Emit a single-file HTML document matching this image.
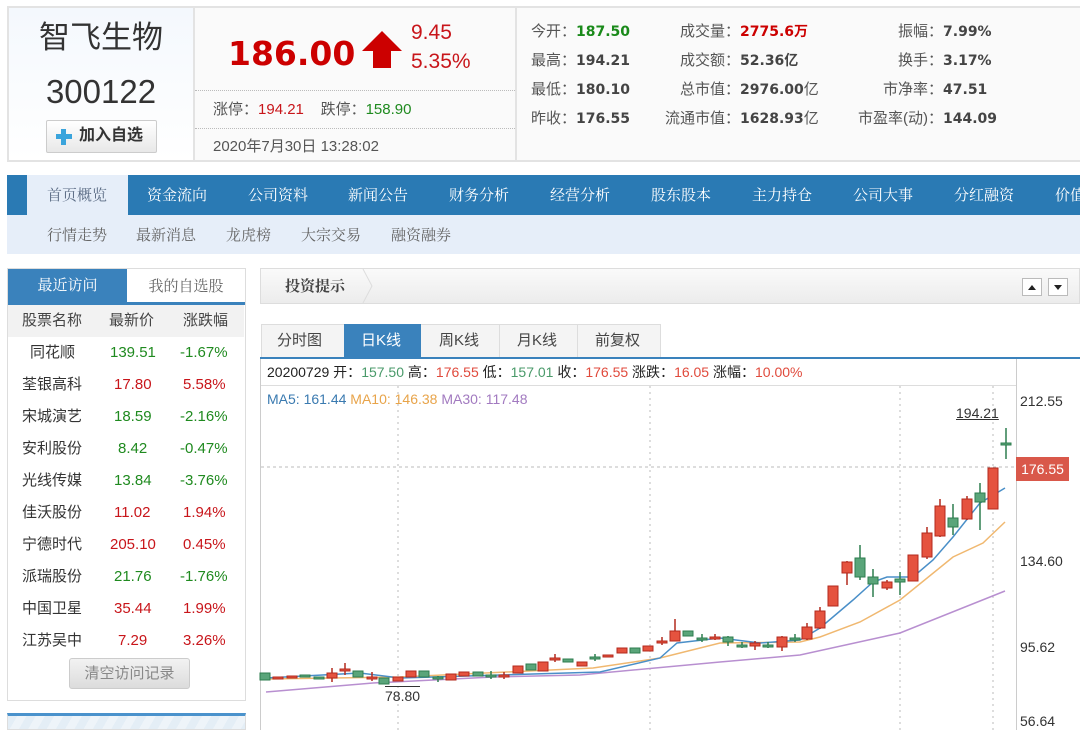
<!DOCTYPE html>
<html><head><meta charset="utf-8">
<style>
*{margin:0;padding:0;box-sizing:border-box}
body{width:1080px;height:730px;overflow:hidden;background:#fff;font-family:"Liberation Sans","Noto Sans CJK SC",sans-serif;color:#333;position:relative}
.a{position:absolute;white-space:nowrap}
.r{color:#c8151a}.g{color:#1f8a1f}
.nav span{position:absolute;top:0;line-height:40px;font-size:15px;color:#fff;font-family:"Noto Serif CJK SC","Noto Sans CJK SC",serif}
.sub span{position:absolute;line-height:40px;font-size:15px;color:#666;font-family:"Noto Serif CJK SC","Noto Sans CJK SC",serif}
.st{position:absolute;font-size:15px;color:#555;line-height:20px}
.st b{color:#444;font-family:"DejaVu Sans","Noto Sans CJK SC",sans-serif;font-size:14px}
.row{position:absolute;left:8px;width:236px;height:32px;font-size:15px;line-height:32px}
.row span{position:absolute}
</style></head><body>
<div class="a" style="left:7px;top:6px;width:1073px;height:156px;border:2px solid #e3e3e3"></div>
<div class="a" style="left:9px;top:8px;width:184px;height:152px;background:linear-gradient(#f4f8fd,#fff)"></div>
<div class="a" style="left:193px;top:8px;width:2px;height:152px;background:#e3e3e3"></div>
<div class="a" style="left:195px;top:8px;width:320px;height:152px;background:#fafafa"></div>
<div class="a" style="left:515px;top:8px;width:2px;height:152px;background:#e3e3e3"></div>
<div class="a" style="left:517px;top:8px;width:563px;height:152px;background:#fafafa"></div>
<div class="a" style="left:9px;top:18px;width:184px;text-align:center;font-size:31px;line-height:40px;color:#333">智飞生物</div>
<div class="a" style="left:9px;top:72px;width:184px;text-align:center;font-size:33px;line-height:40px;color:#333">300122</div>
<div class="a" style="left:46px;top:120px;width:111px;height:33px;border:1px solid #ccc;border-radius:2px;background:linear-gradient(#fff,#e8e8e8)"></div>
<div class="a" style="left:56px;top:134px;width:16px;height:5px;background:#3aa4dc"></div>
<div class="a" style="left:61px;top:129px;width:5px;height:16px;background:#3aa4dc"></div>
<div class="a" style="left:79px;top:124px;font-size:16px;font-weight:bold;line-height:24px;color:#333">加入自选</div>
<div class="a" style="left:228px;top:31px;font-size:33px;font-weight:bold;line-height:46px;color:#c00;font-family:'DejaVu Sans',sans-serif">186.00</div>
<svg class="a" style="left:362px;top:30px" width="42" height="40"><path d="M20 1 L40 21 L29 21 L29 38 L11 38 L11 21 L0 21 Z" fill="#c00"/></svg>
<div class="a r" style="left:411px;top:20px;font-size:21px;line-height:26px">9.45</div>
<div class="a r" style="left:411px;top:49px;font-size:21px;line-height:26px">5.35%</div>
<div class="a" style="left:195px;top:90px;width:320px;border-top:1px dotted #bbb"></div>
<div class="a" style="left:195px;top:128px;width:320px;border-top:1px dotted #bbb"></div>
<div class="a" style="left:213px;top:100px;font-size:15px;line-height:20px;color:#555">涨停：<span class="r">194.21</span>&nbsp;&nbsp;&nbsp;&nbsp;跌停：<span class="g">158.90</span></div>
<div class="a" style="left:213px;top:137px;font-size:15px;line-height:20px;color:#555">2020年7月30日 13:28:02</div>
<div class="st" style="left:531px;top:22px">今开：<b style="color:#1a8a1a">187.50</b></div>
<div class="st" style="left:531px;top:51px">最高：<b>194.21</b></div>
<div class="st" style="left:531px;top:80px">最低：<b>180.10</b></div>
<div class="st" style="left:531px;top:109px">昨收：<b>176.55</b></div>
<div class="st" style="left:680px;top:22px">成交量：<b style="color:#c00">2775.6万</b></div>
<div class="st" style="left:680px;top:51px">成交额：<b>52.36亿</b></div>
<div class="st" style="left:680px;top:80px">总市值：<b>2976.00</b>亿</div>
<div class="st" style="left:665px;top:109px">流通市值：<b>1628.93</b>亿</div>
<div class="st" style="left:898px;top:22px">振幅：<b>7.99%</b></div>
<div class="st" style="left:898px;top:51px">换手：<b>3.17%</b></div>
<div class="st" style="left:883px;top:80px">市净率：<b>47.51</b></div>
<div class="st" style="left:858px;top:109px">市盈率(动)：<b>144.09</b></div>
<div class="a nav" style="left:7px;top:175px;width:1073px;height:40px;background:#2a7ab4">
<div class="a" style="left:20px;top:0;width:101px;height:40px;background:#e6eef9"></div>
<span style="left:40px;color:#5a6b84">首页概览</span><span style="left:140px">资金流向</span><span style="left:241px">公司资料</span><span style="left:341px">新闻公告</span><span style="left:442px">财务分析</span><span style="left:543px">经营分析</span><span style="left:644px">股东股本</span><span style="left:745px">主力持仓</span><span style="left:846px">公司大事</span><span style="left:947px">分红融资</span><span style="left:1048px">价值</span>
</div>
<div class="a sub" style="left:7px;top:215px;width:1073px;height:39px;background:#e6eef9">
<span style="left:40px;top:0">行情走势</span><span style="left:129px;top:0">最新消息</span><span style="left:219px;top:0">龙虎榜</span><span style="left:294px;top:0">大宗交易</span><span style="left:384px;top:0">融资融券</span>
</div>
<div class="a" style="left:7px;top:268px;width:239px;height:433px;border:1px solid #ddd"></div>
<div class="a" style="left:8px;top:269px;width:119px;height:33px;background:#3a82bc;color:#fff;font-size:15px;line-height:32px;text-align:center;font-family:'Noto Serif CJK SC',serif">最近访问</div>
<div class="a" style="left:127px;top:269px;width:118px;height:33px;color:#666;font-size:15px;line-height:34px;text-align:center;font-family:'Noto Serif CJK SC',serif">我的自选股</div>
<div class="a" style="left:8px;top:302px;width:237px;height:3px;background:#3a82bc"></div>
<div class="row" style="top:305px;background:#f2f2f2;color:#444"><span style="left:14px">股票名称</span><span style="left:101px">最新价</span><span style="left:175px">涨跌幅</span></div>
<div class="row" style="top:337px"><span style="left:22px">同花顺</span><span class="g" style="left:102px">139.51</span><span class="g" style="left:172px">-1.67%</span></div>
<div class="row" style="top:369px"><span style="left:14px">荃银高科</span><span class="r" style="left:106px">17.80</span><span class="r" style="left:175px">5.58%</span></div>
<div class="row" style="top:401px"><span style="left:14px">宋城演艺</span><span class="g" style="left:106px">18.59</span><span class="g" style="left:172px">-2.16%</span></div>
<div class="row" style="top:433px"><span style="left:14px">安利股份</span><span class="g" style="left:110px">8.42</span><span class="g" style="left:172px">-0.47%</span></div>
<div class="row" style="top:465px"><span style="left:14px">光线传媒</span><span class="g" style="left:106px">13.84</span><span class="g" style="left:172px">-3.76%</span></div>
<div class="row" style="top:497px"><span style="left:14px">佳沃股份</span><span class="r" style="left:106px">11.02</span><span class="r" style="left:175px">1.94%</span></div>
<div class="row" style="top:529px"><span style="left:14px">宁德时代</span><span class="r" style="left:102px">205.10</span><span class="r" style="left:175px">0.45%</span></div>
<div class="row" style="top:561px"><span style="left:14px">派瑞股份</span><span class="g" style="left:106px">21.76</span><span class="g" style="left:172px">-1.76%</span></div>
<div class="row" style="top:593px"><span style="left:14px">中国卫星</span><span class="r" style="left:106px">35.44</span><span class="r" style="left:175px">1.99%</span></div>
<div class="row" style="top:625px"><span style="left:14px">江苏吴中</span><span class="r" style="left:110px">7.29</span><span class="r" style="left:175px">3.26%</span></div>
<div class="a" style="left:69px;top:658px;width:121px;height:31px;border:1px solid #ccc;border-radius:3px;background:linear-gradient(#f2f2f2,#dcdcdc);color:#888;font-size:15px;line-height:29px;text-align:center">清空访问记录</div>
<div class="a" style="left:7px;top:713px;width:239px;height:17px;border:1px solid #ddd;border-top:3px solid #4a92cc;background:repeating-linear-gradient(120deg,#e4eef6 0 8px,#eef4f9 8px 16px)"></div>
<div class="a" style="left:260px;top:268px;width:820px;height:36px;border:1px solid #ddd;background:linear-gradient(#fafafa,#ececec)"></div>
<div class="a" style="left:285px;top:276px;font-size:15px;line-height:20px;font-weight:bold;color:#444;font-family:'Noto Serif CJK SC',serif">投资提示</div>
<svg class="a" style="left:362px;top:269px" width="12" height="34"><path d="M1 0 L10 17 L1 34" fill="none" stroke="#ddd"/></svg>
<div class="a" style="left:1022px;top:278px;width:20px;height:18px;border:1px solid #bbb;background:#fff"></div>
<div class="a" style="left:1048px;top:278px;width:20px;height:18px;border:1px solid #bbb;background:#fff"></div>
<svg class="a" style="left:1022px;top:278px" width="48" height="18"><path d="M6 12 L10 7 L14 12Z" fill="#222"/><path d="M32 7 L36 12 L40 7Z" fill="#222"/></svg>
<div class="a" style="left:261px;top:324px;width:400px;height:34px;border:1px solid #ddd;background:#f4f4f4"></div>
<div class="a" style="left:344px;top:324px;width:1px;height:34px;background:#ddd"></div>
<div class="a" style="left:420px;top:324px;width:1px;height:34px;background:#ddd"></div>
<div class="a" style="left:499px;top:324px;width:1px;height:34px;background:#ddd"></div>
<div class="a" style="left:577px;top:324px;width:1px;height:34px;background:#ddd"></div>
<div class="a" style="left:344px;top:324px;width:77px;height:34px;background:#3a82bc"></div>
<div class="a" style="left:277px;top:331px;font-size:15px;line-height:20px;color:#444">分时图</div>
<div class="a" style="left:361px;top:331px;font-size:15px;line-height:20px;color:#fff">日K线</div>
<div class="a" style="left:439px;top:331px;font-size:15px;line-height:20px;color:#444">周K线</div>
<div class="a" style="left:517px;top:331px;font-size:15px;line-height:20px;color:#444">月K线</div>
<div class="a" style="left:595px;top:331px;font-size:15px;line-height:20px;color:#444">前复权</div>
<div class="a" style="left:260px;top:357px;width:820px;height:2px;background:#3a82bc"></div>
<div class="a" style="left:260px;top:359px;width:1px;height:371px;background:#ccc"></div>
<div class="a" style="left:1016px;top:359px;width:1px;height:371px;background:#ccc"></div>
<div class="a" style="left:261px;top:385px;width:755px;height:1px;background:#ddd"></div>
<div class="a" style="left:267px;top:362px;font-size:14px;line-height:20px;color:#222">20200729 开：<span style="color:#4a9a6a">157.50</span> 高：<span style="color:#e04a3c">176.55</span> 低：<span style="color:#4a9a6a">157.01</span> 收：<span style="color:#e04a3c">176.55</span> 涨跌：<span style="color:#e04a3c">16.05</span> 涨幅：<span style="color:#e04a3c">10.00%</span></div>
<div class="a" style="left:267px;top:389px;font-size:14px;line-height:20px"><span style="color:#3a7ab0">MA5: 161.44</span> <span style="color:#e8a44a">MA10: 146.38</span> <span style="color:#a27ac0">MA30: 117.48</span></div>
<svg class="a" style="left:0;top:0" width="1080" height="730">
<g stroke="#bbb" stroke-dasharray="2,4"><line x1="398" y1="386" x2="398" y2="730"/><line x1="650" y1="386" x2="650" y2="730"/><line x1="900" y1="386" x2="900" y2="730"/><line x1="993" y1="386" x2="993" y2="730"/><line x1="261" y1="467" x2="1016" y2="467" stroke-dasharray="3,3"/></g>
<polyline fill="none" stroke="#b88fd0" stroke-width="1.5" points="266,692 373,683 493,677 580,675 720,662 800,655 900,633 1005,591"/>
<polyline fill="none" stroke="#f0b870" stroke-width="1.5" points="266,679 400,677 593,668 660,658 720,643 800,642 820,637 860,622 900,600 953,557 983,543 1005,522"/>
<polyline fill="none" stroke="#4a8fc8" stroke-width="1.5" points="266,678 360,673 400,678 600,672 660,658 677,643 720,638 760,643 800,640 820,628 853,600 873,582 887,577 913,577 933,560 953,537 980,503 1005,488"/>
<g id="cd"></g>
</svg>
<div class="a" style="left:956px;top:404px;font-size:14px;line-height:18px;color:#333;text-decoration:underline">194.21</div>
<div class="a" style="left:385px;top:686px;font-size:14px;line-height:18px;color:#333;border-top:1px solid #333">78.80</div>
<div class="a" style="left:1020px;top:392px;font-size:14px;line-height:18px">212.55</div>
<div class="a" style="left:1016px;top:457px;width:53px;height:24px;background:#d9584a;color:#fff;font-size:14px;line-height:24px;text-align:center">176.55</div>
<div class="a" style="left:1020px;top:552px;font-size:14px;line-height:18px">134.60</div>
<div class="a" style="left:1020px;top:638px;font-size:14px;line-height:18px">95.62</div>
<div class="a" style="left:1020px;top:712px;font-size:14px;line-height:18px">56.64</div>
<script>
var d=[[265,'g',673,680],[278,'r',677,679],[292,'r',676,678],[305,'g',675,677],[319,'g',677,677],[332,'r',673,678,668,682],[345,'r',669,669,663,675],[358,'g',671,677],[372,'r',677,677,672,681],[384,'g',678,684],[398,'r',677,681],[411,'r',671,677],[424,'g',671,677],[438,'g',677,679,676,682],[451,'r',674,680],[464,'r',672,676],[478,'g',672,676],[491,'g',675,675,671,679],[504,'r',675,676,672,679],[518,'r',666,673],[531,'g',664,670],[543,'r',662,671],[555,'r',658,658,654,662],[568,'g',659,662],[582,'r',662,666],[595,'g',657,658,654,661],[608,'r',655,657],[622,'r',648,653],[635,'g',648,653],[648,'r',646,651],[662,'r',641,641,637,645],[675,'r',631,641,619,641],[688,'g',631,636],[702,'g',638,640,634,642],[715,'r',637,637,634,640],[728,'g',637,642,636,646],[742,'g',645,646,642,648],[755,'r',643,646,641,650],[768,'g',645,646,642,648],[782,'r',637,647,636,651],[795,'g',638,638,634,642],[807,'r',627,639,623,640],[820,'r',611,628,607,629],[833,'r',586,606],[847,'r',562,573,561,585],[860,'g',558,577,545,580],[873,'g',577,584,569,597],[887,'r',582,588,580,590],[900,'g',579,582,572,595],[913,'r',555,581],[927,'r',533,557,527,559],[940,'r',506,536,499,537],[953,'g',518,527,504,535],[967,'r',499,519,496,520],[980,'g',493,502,483,530],[993,'r',468,509],[1006,'g',443,445,428,459]];
var s='';d.forEach(function(c){var x=c[0],col=c[1]=='r'?'#e5533f':'#5aa57a',st=c[1]=='r'?'#b32a1e':'#2e7d4f',t=c[2],b=c[3],h=c[4]||t,l=c[5]||b;
s+='<line x1="'+x+'" x2="'+x+'" y1="'+h+'" y2="'+l+'" stroke="'+st+'" stroke-width="1.5"/>';
var hh=Math.max(b-t,2);s+='<rect x="'+(x-5)+'" y="'+t+'" width="10" height="'+hh+'" fill="'+col+'" stroke="'+st+'"/>';});
document.getElementById('cd').innerHTML=s;
</script>
</body></html>
